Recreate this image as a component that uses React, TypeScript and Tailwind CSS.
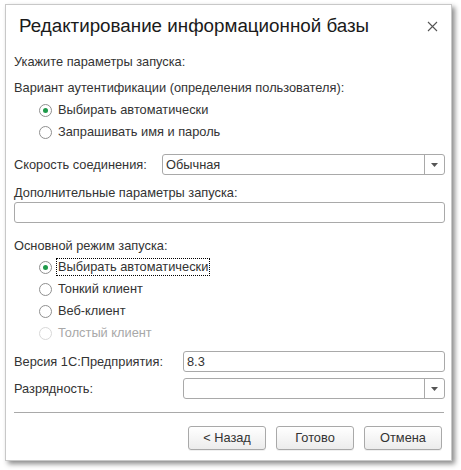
import React from 'react';

const font = { fontFamily: '"Liberation Sans", Arial, sans-serif' };

function Radio({ label, checked, disabled, focused }: { label: string; checked?: boolean; disabled?: boolean; focused?: boolean }) {
  return (
    <div className="h-[22px] flex items-center pl-[25px]">
      <span
        className={`w-[13px] h-[13px] rounded-full border flex items-center justify-center bg-white ${disabled ? 'border-[#d8d8d8]' : 'border-[#8f8f8f]'}`}
      >
        {checked && <span className="w-[5px] h-[5px] rounded-full bg-[#1f9a4a]" />}
      </span>
      <span
        className={`ml-[5px] px-[1px] leading-[16px] ${disabled ? 'text-[#a8a8a8]' : 'text-[#333333]'} ${focused ? 'outline outline-1 outline-dotted outline-[#000]' : ''}`}
      >
        {label}
      </span>
    </div>
  );
}

function Field({ value, dropdown, className }: { value?: string; dropdown?: boolean; className?: string }) {
  return (
    <div className={`h-[21px] border border-[#a9a9a9] rounded-[3px] bg-white flex items-stretch ${className ?? ''}`}>
      <div className="flex-1 flex items-center pl-[3px] text-[#333333]">{value}</div>
      {dropdown && (
        <div className="w-[20px] border-l border-[#a9a9a9] flex items-center justify-center">
          <svg width="7" height="4" viewBox="0 0 7 4">
            <path d="M0 0 H7 L3.5 4 Z" fill="#555" />
          </svg>
        </div>
      )}
    </div>
  );
}

function Button({ label }: { label: string }) {
  return (
    <button className="w-[78px] h-[24px] border border-[#a9a9a9] rounded-[3px] bg-gradient-to-b from-white to-[#ececec] text-[#333333] text-[12.8px] shadow-[0_1px_0_rgba(0,0,0,0.06)]">
      {label}
    </button>
  );
}

export default function App() {
  return (
    <div className="w-[461px] h-[470px] bg-white" style={font}>
      <div className="pl-[5px] pt-[4px]">
        <div className="w-[447px] h-[457px] border border-[#c8c8c8] bg-white shadow-[3px_3px_5px_rgba(0,0,0,0.45)] text-[12.8px] text-[#333333] flex flex-col">
          {/* Title */}
          <div className="h-[42px] flex items-center justify-between pl-[13px] pr-[13px]">
            <span className="text-[18.8px] text-[#1a1a1a]">Редактирование информационной базы</span>
            <svg width="11" height="11" viewBox="0 0 11 11">
              <path d="M1 1 L10 10 M10 1 L1 10" stroke="#555" strokeWidth="1.1" />
            </svg>
          </div>

          <div className="pl-[8px] pr-[6px] flex flex-col">
            <div className="h-[30px] flex items-center">Укажите параметры запуска:</div>
            <div className="h-[22px] flex items-center">Вариант аутентификации (определения пользователя):</div>
            <Radio label="Выбирать автоматически" checked />
            <Radio label="Запрашивать имя и пароль" />

            <div className="h-[11px]" />
            <div className="h-[21px] flex items-center">
              <span className="w-[148px]">Скорость соединения:</span>
              <Field value="Обычная" dropdown className="flex-1" />
            </div>

            <div className="h-[8px]" />
            <div className="h-[19px] flex items-center">Дополнительные параметры запуска:</div>
            <Field />

            <div className="h-[12px]" />
            <div className="h-[21px] flex items-center">Основной режим запуска:</div>
            <Radio label="Выбирать автоматически" checked focused />
            <Radio label="Тонкий клиент" />
            <Radio label="Веб-клиент" />
            <Radio label="Толстый клиент" disabled />

            <div className="h-[7px]" />
            <div className="h-[21px] flex items-center">
              <span className="w-[169px]">Версия 1С:Предприятия:</span>
              <Field value="8.3" className="flex-1" />
            </div>
            <div className="h-[6px]" />
            <div className="h-[21px] flex items-center">
              <span className="w-[169px] self-start pt-[1px]">Разрядность:</span>
              <Field dropdown className="flex-1" />
            </div>

            <div className="h-[13px]" />
            <div className="h-px bg-[#a9a9a9] mr-[1px]" />
            <div className="h-[13px]" />
            <div className="flex justify-end gap-[10px] pr-[3px]">
              <Button label="< Назад" />
              <Button label="Готово" />
              <Button label="Отмена" />
            </div>
          </div>
        </div>
      </div>
    </div>
  );
}
